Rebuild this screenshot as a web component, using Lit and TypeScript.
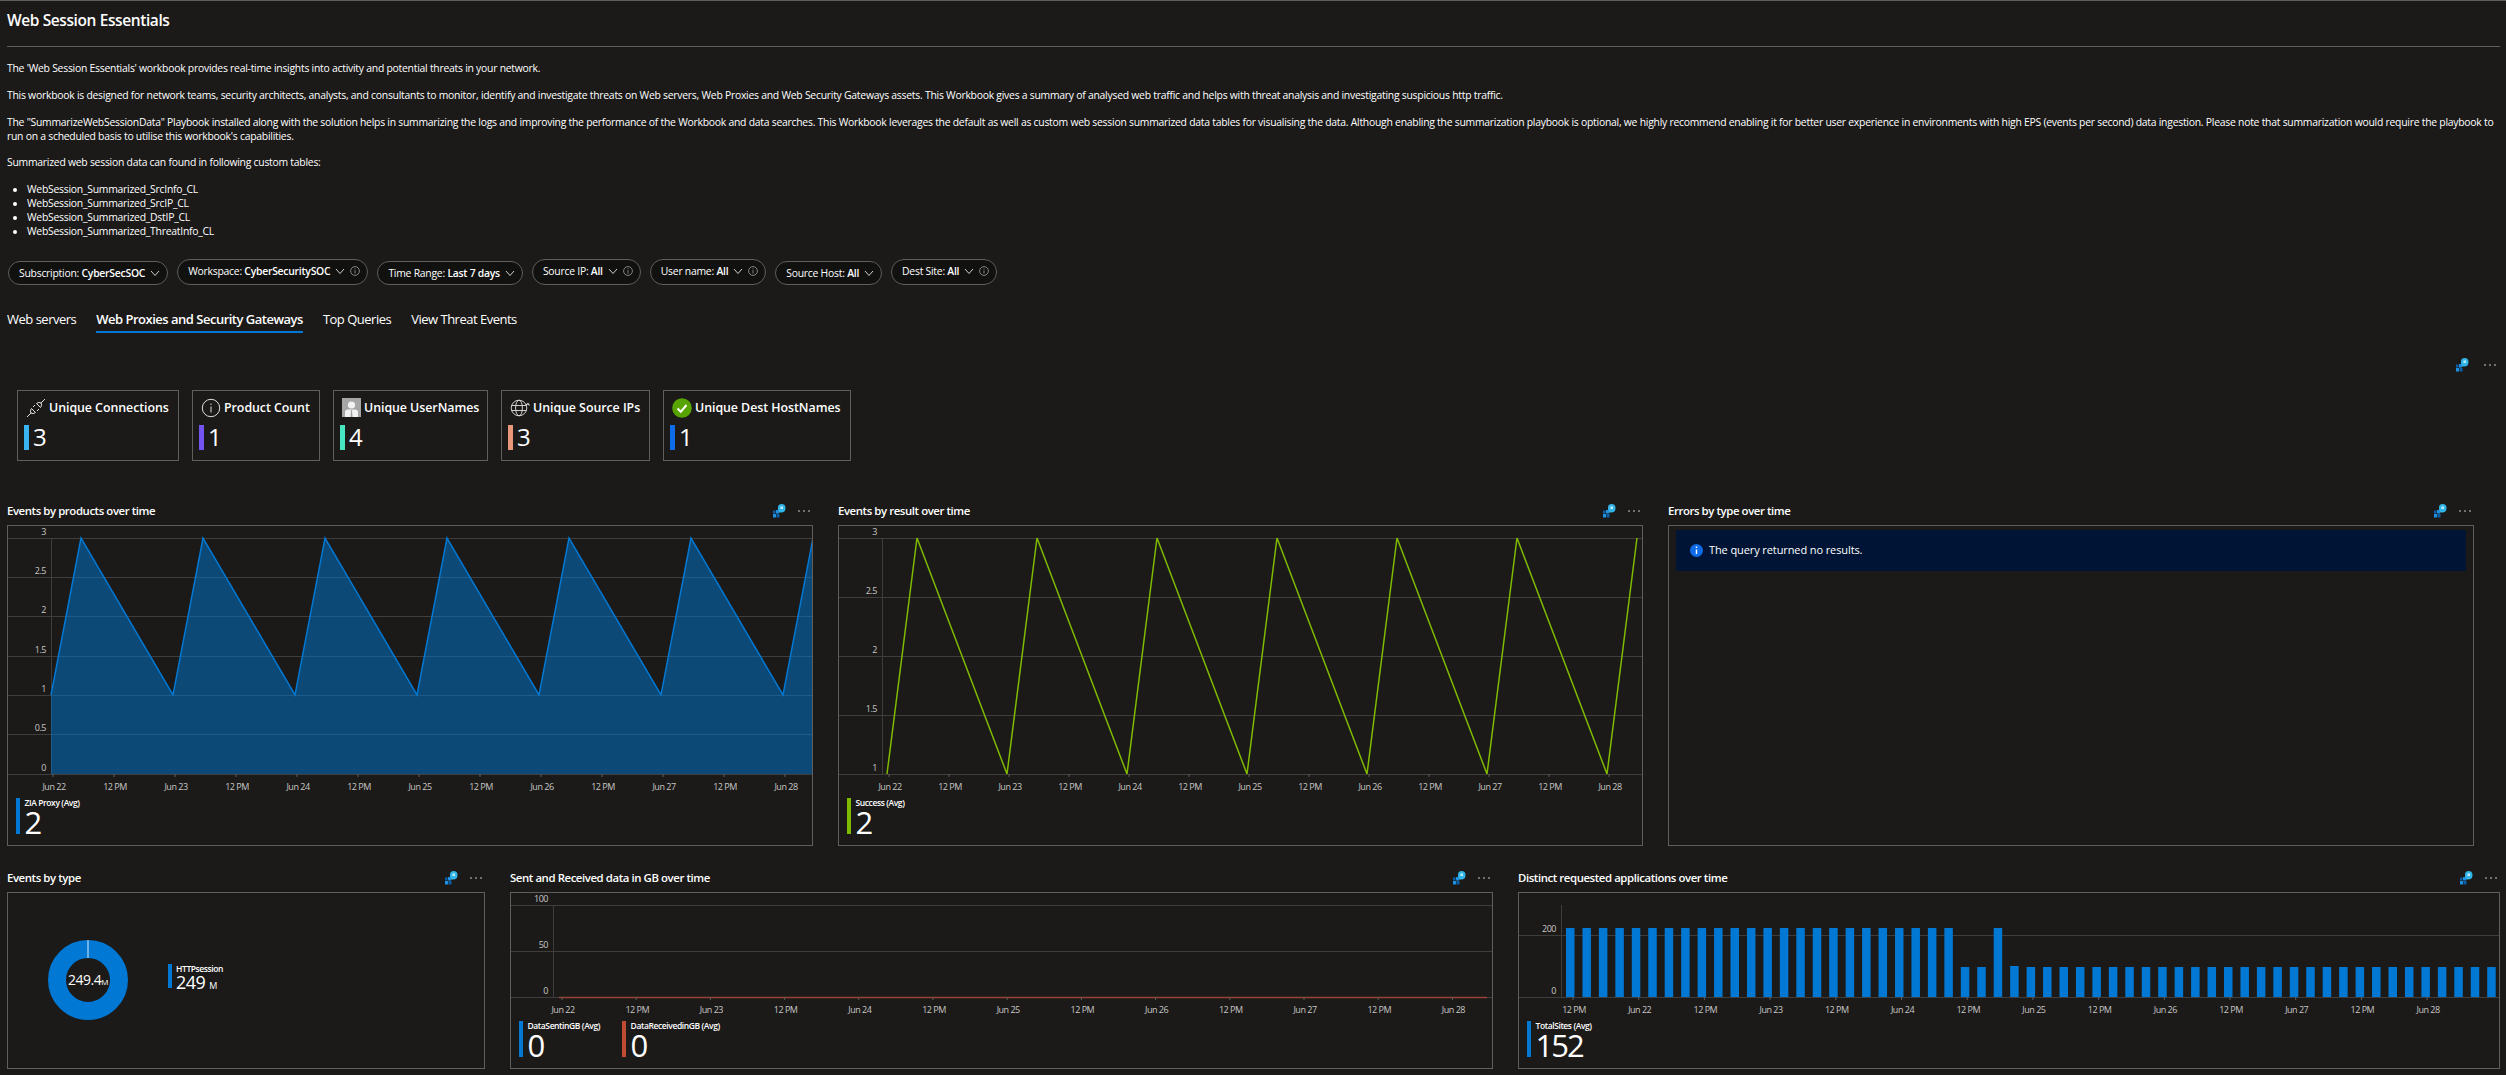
import { LitElement, html, css, svg } from 'lit';
import { customElement } from 'lit/decorators.js';

const GRID = '#3f3e3c';
const AXIS_TEXT = '#c8c6c4';

const pinIcon = html`<svg class="pin" width="13" height="14" viewBox="0 0 13 14">
  <path d="M5 3.5 Q5 0 8.5 0 Q12.5 0 12.5 4 Q12.5 8.5 8 8.5 L5 8.5 Z" fill="#32b5e6" />
  <rect x="7.5" y="2.5" width="2.5" height="2.5" fill="#b8ecfb" />
  <rect x="3" y="6" width="3" height="3.5" fill="#1f8fe0" />
  <rect x="0" y="10" width="3" height="3.5" fill="#1f8fe0" />
  <rect x="3.5" y="10" width="3" height="3.5" fill="#0a5ea8" />
  <rect x="0" y="6.5" width="2.5" height="3" fill="#0a5ea8" />
</svg>`;

const dots = html`<svg width="12" height="4" viewBox="0 0 12 4">
  <circle cx="1" cy="2" r="0.8" fill="#e1dfdd" />
  <circle cx="6" cy="2" r="0.8" fill="#e1dfdd" />
  <circle cx="11" cy="2" r="0.8" fill="#e1dfdd" />
</svg>`;

function peaks(start: number, first: number, period: number, count: number, top: number, bottom: number, end: number) {
  // sawtooth: starts low, climbs to a peak, falls to the next trough
  const pts: string[] = [`${start},${bottom}`];
  for (let i = 0; i < count; i++) {
    const peak = first + i * period;
    pts.push(`${peak},${top}`);
    const trough = peak + period - 30;
    if (trough < end && i < count - 1) pts.push(`${trough},${bottom}`);
  }
  return pts;
}

function axisLabels(start: number, step: number, labels: string[], y: number) {
  return labels.map((t, i) => {
    const x = start + i * step;
    return svg`<line x1=${x} x2=${x} y1=${y - 16} y2=${y - 13} stroke="#605e5c" />
      <text x=${x + 1} y=${y} fill=${AXIS_TEXT} text-anchor="middle">${t}</text>`;
  });
}

const days = ['Jun 22', '12 PM', 'Jun 23', '12 PM', 'Jun 24', '12 PM', 'Jun 25', '12 PM', 'Jun 26', '12 PM', 'Jun 27', '12 PM', 'Jun 28'];

function yAxis(rows: [string, number][], w: number, axisX: number, top: number, bottom: number) {
  return svg`
    ${rows.map(([t, y]) => svg`
      <line x1="0" x2=${w} y1=${y + 0.5} y2=${y + 0.5} stroke=${GRID} />
      <text x=${axisX - 5} y=${y - 3} fill=${AXIS_TEXT} text-anchor="end">${t}</text>`)}
    <line x1=${axisX + 0.5} x2=${axisX + 0.5} y1=${top} y2=${bottom} stroke=${GRID} />`;
}

@customElement('app-root')
export class AppRoot extends LitElement {
  static override styles = css`
    :host {
      display: block;
      width: 2506px;
      height: 1075px;
      overflow: hidden;
      background: #1b1a19;
      color: #fff;
      font-family: 'Open Sans', 'Noto Sans', sans-serif;
      font-size: 10.4px;
      line-height: 14px;
      letter-spacing: -0.25px;
      box-sizing: border-box;
      border-top: 1px solid #605e5c;
      padding: 0 7px;
    }
    h1 {
      margin: 0 -1px 0 0;
      height: 46px;
      padding-top: 11px;
      box-sizing: border-box;
      font-size: 15.5px;
      line-height: 16px;
      letter-spacing: -0.4px;
      font-weight: 600;
      border-bottom: 1px solid #605e5c;
    }
    .intro {
      padding-top: 14px;
      white-space: nowrap;
    }
    .intro p {
      margin: 0 0 12.8px;
    }
    .intro ul {
      margin: 0;
      padding-left: 20px;
    }
    .chips {
      display: flex;
      gap: 9px;
      align-items: flex-end;
      margin-top: 20.8px;
      margin-left: 1px;
    }
    .chip {
      display: flex;
      align-items: center;
      gap: 5px;
      height: 24px;
      padding: 0 7px 0 10px;
      background: #111110;
      border: 1px solid #605e5c;
      border-radius: 13px;
      box-sizing: border-box;
      white-space: nowrap;
      font-weight: 500;
    }
    .chip.info {
      height: 26px;
      padding-bottom: 2px;
    }
    .chip b {
      font-weight: 600;
    }
    .tabs {
      display: flex;
      gap: 20px;
      margin-top: 25px;
      font-size: 13px;
      line-height: 18px;
      letter-spacing: -0.5px;
    }
    .tab {
      padding-bottom: 3px;
      border-bottom: 2px solid transparent;
    }
    .tab.on {
      font-weight: 600;
      border-bottom-color: #0078d4;
    }
    .tile-tools {
      display: flex;
      justify-content: flex-end;
      align-items: center;
      gap: 15px;
      height: 16px;
      margin-top: 24px;
      padding-right: 3px;
    }
    .tiles {
      display: flex;
      gap: 13px;
      margin: 17px 0 0 10px;
    }
    .tile {
      height: 71px;
      box-sizing: border-box;
      border: 1px solid #605e5c;
      padding: 7px 6px 0 6px;
    }
    .tile-head {
      display: flex;
      align-items: center;
      gap: 3px;
      height: 20px;
      padding-left: 2px;
      font-size: 12.4px;
      letter-spacing: -0.05px;
      font-weight: 600;
      white-space: nowrap;
    }
    .tile-value {
      display: flex;
      align-items: center;
      gap: 4px;
      margin-top: 7px;
      height: 25px;
      font-size: 24px;
      font-weight: 500;
    }
    .bar {
      display: block;
      width: 5px;
      height: 25px;
    }
    .row {
      display: grid;
      column-gap: 25px;
    }
    .row.a {
      grid-template-columns: 806px 805px 806px;
      margin-top: 36px;
    }
    .row.b {
      grid-template-columns: 478px 983px 982px;
      margin-top: 18px;
    }
    .panel-head {
      display: flex;
      align-items: center;
      justify-content: space-between;
      height: 28px;
      font-size: 11.4px;
      letter-spacing: -0.42px;
      font-weight: 600;
      padding-right: 3px;
    }
    .tools {
      display: flex;
      align-items: center;
      gap: 12px;
      font-weight: 400;
    }
    .box {
      box-sizing: border-box;
      border: 1px solid #605e5c;
    }
    .row.a .box {
      height: 321px;
    }
    .row.b .box {
      height: 177px;
    }
    svg.chart {
      display: block;
      font-size: 9px;
      letter-spacing: -0.5px;
    }
    .legend {
      display: flex;
      gap: 22px;
      padding-left: 8px;
    }
    .item {
      display: flex;
      gap: 5px;
    }
    .item i {
      display: block;
      width: 3.5px;
      height: 36px;
    }
    .item span {
      display: block;
      font-size: 8.5px;
      line-height: 10px;
      letter-spacing: -0.4px;
      font-weight: 600;
      white-space: nowrap;
    }
    .item strong {
      display: block;
      font-size: 31px;
      line-height: 29px;
      letter-spacing: -2px;
      font-weight: 500;
    }
    .notice {
      display: flex;
      align-items: center;
      gap: 6px;
      height: 41px;
      margin: 4px 7px 0;
      padding-left: 14px;
      background: #001535;
      font-size: 11px;
      letter-spacing: -0.1px;
    }
    .donut-wrap {
      display: flex;
      align-items: center;
      height: 175px;
      gap: 40px;
      padding-left: 40px;
    }
    .donut {
      position: relative;
      width: 80px;
      height: 80px;
    }
    .donut-label {
      position: absolute;
      inset: 0;
      display: flex;
      align-items: baseline;
      justify-content: center;
      line-height: 80px;
      font-size: 14px;
      letter-spacing: -0.5px;
      font-weight: 500;
    }
    .donut-label small {
      font-size: 8px;
    }
    .pie-legend {
      display: flex;
      gap: 4px;
      margin-top: -2px;
    }
    .pie-legend i {
      display: block;
      width: 4px;
      height: 24px;
      background: #0078d4;
    }
    .pie-legend span {
      display: block;
      font-size: 8.5px;
      line-height: 9px;
      letter-spacing: -0.4px;
      font-weight: 600;
    }
    .pie-legend strong {
      display: block;
      font-size: 18px;
      line-height: 19px;
      letter-spacing: -0.6px;
      font-weight: 500;
    }
    .pie-legend small {
      font-size: 9px;
    }
  `;

  private chip(label: string, value: string, info = false) {
    return html`<div class="chip ${info ? 'info' : ''}">
      <span>${label}: <b>${value}</b></span>
      <svg width="10" height="10" viewBox="0 0 10 10"><path d="M1 3 L5 7.5 L9 3" fill="none" stroke="#d2d0ce" /></svg>
      ${info
        ? html`<svg width="10" height="10" viewBox="0 0 10 10">
            <circle cx="5" cy="5" r="4.4" fill="none" stroke="#a19f9d" stroke-width="0.8" />
            <path d="M5 4.2 V7.5 M5 2.4 V3.3" stroke="#a19f9d" stroke-width="0.8" />
          </svg>`
        : ''}
    </div>`;
  }

  private tile(icon: unknown, label: string, value: string, colour: string, width: number) {
    return html`<div class="tile" style="width:${width}px">
      <div class="tile-head">${icon}<span>${label}</span></div>
      <div class="tile-value"><span class="bar" style="background:${colour}"></span>${value}</div>
    </div>`;
  }

  private panelHead(title: string) {
    return html`<div class="panel-head">
      <span>${title}</span>
      <span class="tools">${pinIcon}${dots}</span>
    </div>`;
  }

  private legendItem(label: string, value: string, colour: string) {
    return html`<div class="item">
      <i style="background:${colour}"></i>
      <div><span>${label}</span><strong>${value}</strong></div>
    </div>`;
  }

  private productsChart() {
    const w = 804;
    const top = 12;
    const low = 169;
    const bottom = 248;
    const pts = peaks(43, 73, 122, 7, top, low, w);
    const line = pts.join(' ');
    const rows: [string, number][] = [['3', 12], ['2.5', 51], ['2', 90], ['1.5', 130], ['1', 169], ['0.5', 208], ['0', 248]];
    return html`<svg class="chart" width=${w} height="272" viewBox="0 0 ${w} 272">
      ${yAxis(rows, w, 43, top, bottom)}
      <polygon points="43,${bottom} ${line} ${w},${top} ${w},${bottom}" fill="#0078d4" fill-opacity="0.5" />
      <polyline points=${line} fill="none" stroke="#0078d4" stroke-width="1.5" />
      ${axisLabels(45, 61, days, 264)}
    </svg>`;
  }

  private resultChart() {
    const w = 803;
    const top = 12;
    const bottom = 248;
    const pts = peaks(48, 78, 120, 7, top, bottom, w);
    const rows: [string, number][] = [['3', 12], ['2.5', 71], ['2', 130], ['1.5', 189], ['1', 248]];
    return html`<svg class="chart" width=${w} height="272" viewBox="0 0 ${w} 272">
      ${yAxis(rows, w, 43, top, bottom)}
      <polyline points=${pts.join(' ')} fill="none" stroke="#7fba00" stroke-width="1.5" />
      ${axisLabels(50, 60, days, 264)}
    </svg>`;
  }

  private sentChart() {
    const w = 981;
    const rows: [string, number][] = [['100', 12], ['50', 58], ['0', 104]];
    return html`<svg class="chart" width=${w} height="128" viewBox="0 0 ${w} 128">
      ${yAxis(rows, w, 42, 12, 104)}
      <line x1="48" x2="976" y1="104.5" y2="104.5" stroke="#c14a33" stroke-opacity="0.7" stroke-width="1.5" />
      ${axisLabels(51, 74.2, days, 120)}
    </svg>`;
  }

  private sitesChart() {
    const w = 980;
    const bars = Array.from({ length: 57 }, (_, i) => {
      const tall = i < 24 || i === 26;
      const y = tall ? 35 : i === 27 ? 73 : 74;
      return svg`<rect x=${47 + i * 16.45} y=${y} width="8.5" height=${104 - y} fill="#0078d4" />`;
    });
    const rows: [string, number][] = [['200', 42], ['0', 104]];
    const labels = ['12 PM', 'Jun 22', '12 PM', 'Jun 23', '12 PM', 'Jun 24', '12 PM', 'Jun 25', '12 PM', 'Jun 26', '12 PM', 'Jun 27', '12 PM', 'Jun 28'];
    return html`<svg class="chart" width=${w} height="128" viewBox="0 0 ${w} 128">
      ${yAxis(rows, w, 42, 12, 104)}
      ${bars}
      ${axisLabels(54, 65.7, labels, 120)}
    </svg>`;
  }

  override render() {
    const plug = html`<svg width="20" height="20" viewBox="0 0 20 20" fill="none" stroke="#e1dfdd" stroke-width="1">
      <path d="M1 19 L5 15 M15 5 L19 1" />
      <path d="M5.5 10.5 L9.5 14.5 Q7 16.5 5 15 Q3.5 13 5.5 10.5 Z" />
      <path d="M14.5 9.5 L10.5 5.5 Q13 3.5 15 5 Q16.5 7 14.5 9.5 Z" />
      <path d="M7 9 L9 7 M11 13 L13 11" />
    </svg>`;
    const info = html`<svg width="20" height="20" viewBox="0 0 20 20" fill="none" stroke="#e1dfdd">
      <circle cx="10" cy="10" r="8.7" />
      <path d="M10 8.5 V14.5 M10 5.5 V7" />
    </svg>`;
    const user = html`<svg width="19" height="19" viewBox="0 0 19 19">
      <rect width="19" height="19" fill="#a6a6a6" />
      <circle cx="9.5" cy="7" r="3.6" fill="#f2f2f2" />
      <path d="M3 19 V14 Q3 11.5 6 11.5 H13 Q16 11.5 16 14 V19 Z" fill="#f2f2f2" />
      <path d="M9 12 H10 L10.5 19 H8.5 Z" fill="#a6a6a6" />
    </svg>`;
    const globe = html`<svg width="20" height="20" viewBox="0 0 20 20" fill="none" stroke="#e1dfdd" stroke-width="0.9">
      <circle cx="9" cy="10" r="7.8" />
      <ellipse cx="9" cy="10" rx="3.4" ry="7.8" />
      <path d="M1.6 7.5 H16.4 M1.6 12.5 H16.4" />
      <path d="M16 7 L18 5.5 L19.5 7.5" stroke-width="1.2" />
    </svg>`;
    const check = html`<svg width="20" height="20" viewBox="0 0 20 20">
      <circle cx="10" cy="10" r="9.8" fill="#57a300" />
      <path d="M5.5 10.5 L8.8 13.8 L14.5 7" fill="none" stroke="#fff" stroke-width="2" />
    </svg>`;

    return html`
      <h1>Web Session Essentials</h1>
      <div class="intro">
        <p>The 'Web Session Essentials' workbook provides real-time insights into activity and potential threats in your network.</p>
        <p>This workbook is designed for network teams, security architects, analysts, and consultants to monitor, identify and investigate threats on Web servers, Web Proxies and Web Security Gateways assets. This Workbook gives a summary of analysed web traffic and helps with threat analysis and investigating suspicious http traffic.</p>
        <p>The "SummarizeWebSessionData" Playbook installed along with the solution helps in summarizing the logs and improving the performance of the Workbook and data searches. This Workbook leverages the default as well as custom web session summarized data tables for visualising the data. Although enabling the summarization playbook is optional, we highly recommend enabling it for better user experience in environments with high EPS (events per second) data ingestion. Please note that summarization would require the playbook to<br />run on a scheduled basis to utilise this workbook's capabilities.</p>
        <p>Summarized web session data can found in following custom tables:</p>
        <ul>
          <li>WebSession_Summarized_SrcInfo_CL</li>
          <li>WebSession_Summarized_SrcIP_CL</li>
          <li>WebSession_Summarized_DstIP_CL</li>
          <li>WebSession_Summarized_ThreatInfo_CL</li>
        </ul>
      </div>
      <div class="chips">
        ${this.chip('Subscription', 'CyberSecSOC')}
        ${this.chip('Workspace', 'CyberSecuritySOC', true)}
        ${this.chip('Time Range', 'Last 7 days')}
        ${this.chip('Source IP', 'All', true)}
        ${this.chip('User name', 'All', true)}
        ${this.chip('Source Host', 'All')}
        ${this.chip('Dest Site', 'All', true)}
      </div>
      <div class="tabs">
        <span class="tab">Web servers</span>
        <span class="tab on">Web Proxies and Security Gateways</span>
        <span class="tab">Top Queries</span>
        <span class="tab">View Threat Events</span>
      </div>
      <div class="tile-tools">${pinIcon}${dots}</div>
      <div class="tiles">
        ${this.tile(plug, 'Unique Connections', '3', '#3ab4f0', 162)}
        ${this.tile(info, 'Product Count', '1', '#7354f0', 128)}
        ${this.tile(user, 'Unique UserNames', '4', '#45e6c0', 155)}
        ${this.tile(globe, 'Unique Source IPs', '3', '#e8977a', 149)}
        ${this.tile(check, 'Unique Dest HostNames', '1', '#0f6ce8', 188)}
      </div>
      <div class="row a">
        <div>
          ${this.panelHead('Events by products over time')}
          <div class="box">${this.productsChart()}<div class="legend">${this.legendItem('ZIA Proxy (Avg)', '2', '#0078d4')}</div></div>
        </div>
        <div>
          ${this.panelHead('Events by result over time')}
          <div class="box">${this.resultChart()}<div class="legend">${this.legendItem('Success (Avg)', '2', '#7fba00')}</div></div>
        </div>
        <div>
          ${this.panelHead('Errors by type over time')}
          <div class="box">
            <div class="notice">
              <svg width="13" height="13" viewBox="0 0 13 13">
                <circle cx="6.5" cy="6.5" r="6.5" fill="#0f6ce8" />
                <path d="M6.5 5.5 V10 M6.5 2.5 V4" stroke="#fff" stroke-width="1.4" />
              </svg>
              <span>The query returned no results.</span>
            </div>
          </div>
        </div>
      </div>
      <div class="row b">
        <div>
          ${this.panelHead('Events by type')}
          <div class="box">
            <div class="donut-wrap">
              <div class="donut">
                <svg width="80" height="80" viewBox="0 0 80 80">
                  <circle cx="40" cy="40" r="31" fill="none" stroke="#0078d4" stroke-width="18" />
                  <line x1="40" x2="40" y1="0" y2="18" stroke="#d9e9f5" stroke-width="1" />
                </svg>
                <div class="donut-label"><span>249.4<small>M</small></span></div>
              </div>
              <div class="pie-legend">
                <i></i>
                <div><span>HTTPsession</span><strong>249 <small>M</small></strong></div>
              </div>
            </div>
          </div>
        </div>
        <div>
          ${this.panelHead('Sent and Received data in GB over time')}
          <div class="box">
            ${this.sentChart()}
            <div class="legend">
              ${this.legendItem('DataSentinGB (Avg)', '0', '#0078d4')}
              ${this.legendItem('DataReceivedinGB (Avg)', '0', '#c14a33')}
            </div>
          </div>
        </div>
        <div>
          ${this.panelHead('Distinct requested applications over time')}
          <div class="box">${this.sitesChart()}<div class="legend">${this.legendItem('TotalSites (Avg)', '152', '#0078d4')}</div></div>
        </div>
      </div>
    `;
  }
}
